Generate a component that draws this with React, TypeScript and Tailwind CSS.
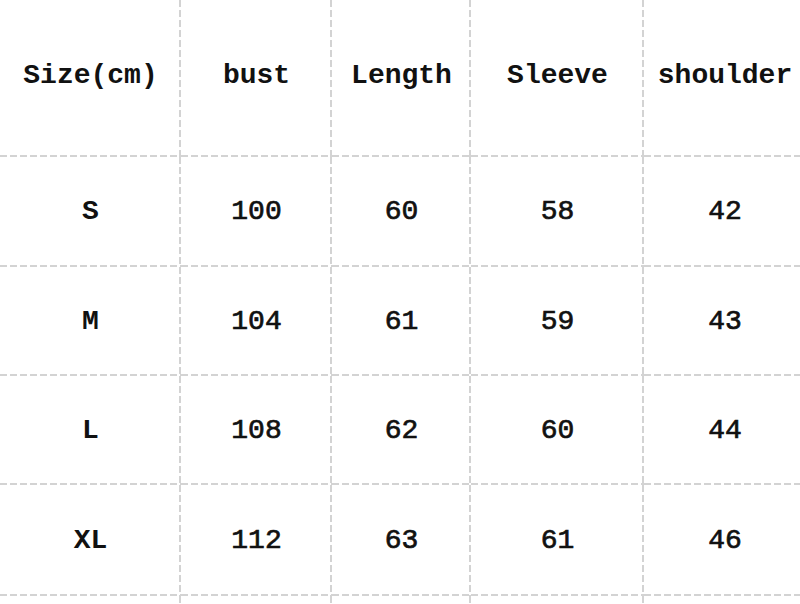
import React from 'react';

const headers = ['Size(cm)', 'bust', 'Length', 'Sleeve', 'shoulder'];

const rows = [
  ['S', '100', '60', '58', '42'],
  ['M', '104', '61', '59', '43'],
  ['L', '108', '62', '60', '44'],
  ['XL', '112', '63', '61', '46'],
];

// dashed bottom + right rule drawn on every cell
const cellLines =
  'bg-no-repeat [background-image:repeating-linear-gradient(to_right,#d3d3d3_0_7px,transparent_7px_10px),repeating-linear-gradient(to_bottom,#d3d3d3_0_7px,transparent_7px_10px)] [background-size:100%_2px,2px_100%] [background-position:left_bottom,right_top]';

const rightLine =
  'bg-no-repeat [background-image:repeating-linear-gradient(to_bottom,#d3d3d3_0_7px,transparent_7px_10px)] [background-size:2px_100%] [background-position:right_top]';

const Cell = ({ children, last, bold }: { children?: React.ReactNode; last?: boolean; bold?: boolean }) => (
  <div
    className={
      last
        ? 'flex items-center justify-center bg-no-repeat [background-image:repeating-linear-gradient(to_right,#d3d3d3_0_7px,transparent_7px_10px)] [background-size:100%_2px] [background-position:left_bottom]'
        : 'flex items-center justify-center ' + cellLines
    }
  >
    <span className={bold ? 'font-bold' : 'font-normal [-webkit-text-stroke:0.7px_#111]'}>{children}</span>
  </div>
);

export default function App() {
  return (
    <div className="w-[800px] h-[604px] overflow-hidden bg-white text-[#111]">
      <div
        className="grid w-[806px] h-[604px] grid-cols-[181px_151px_139px_173px_1fr] grid-rows-[157px_110px_109px_109px_111px_1fr] text-[28px] leading-none"
        style={{ fontFamily: '"Liberation Mono", "Courier New", monospace' }}
      >
        {headers.map((h, i) => (
          <Cell key={h} bold last={i === 4}>
            <span className="block pb-[6px]">{h}</span>
          </Cell>
        ))}
        {rows.map((r) =>
          r.map((v, i) => (
            <Cell key={r[0] + i} bold={i === 0} last={i === 4}>
              {v}
            </Cell>
          ))
        )}
        <div className={rightLine} />
        <div className={rightLine} />
        <div className={rightLine} />
        <div className={rightLine} />
        <div />
      </div>
    </div>
  );
}
